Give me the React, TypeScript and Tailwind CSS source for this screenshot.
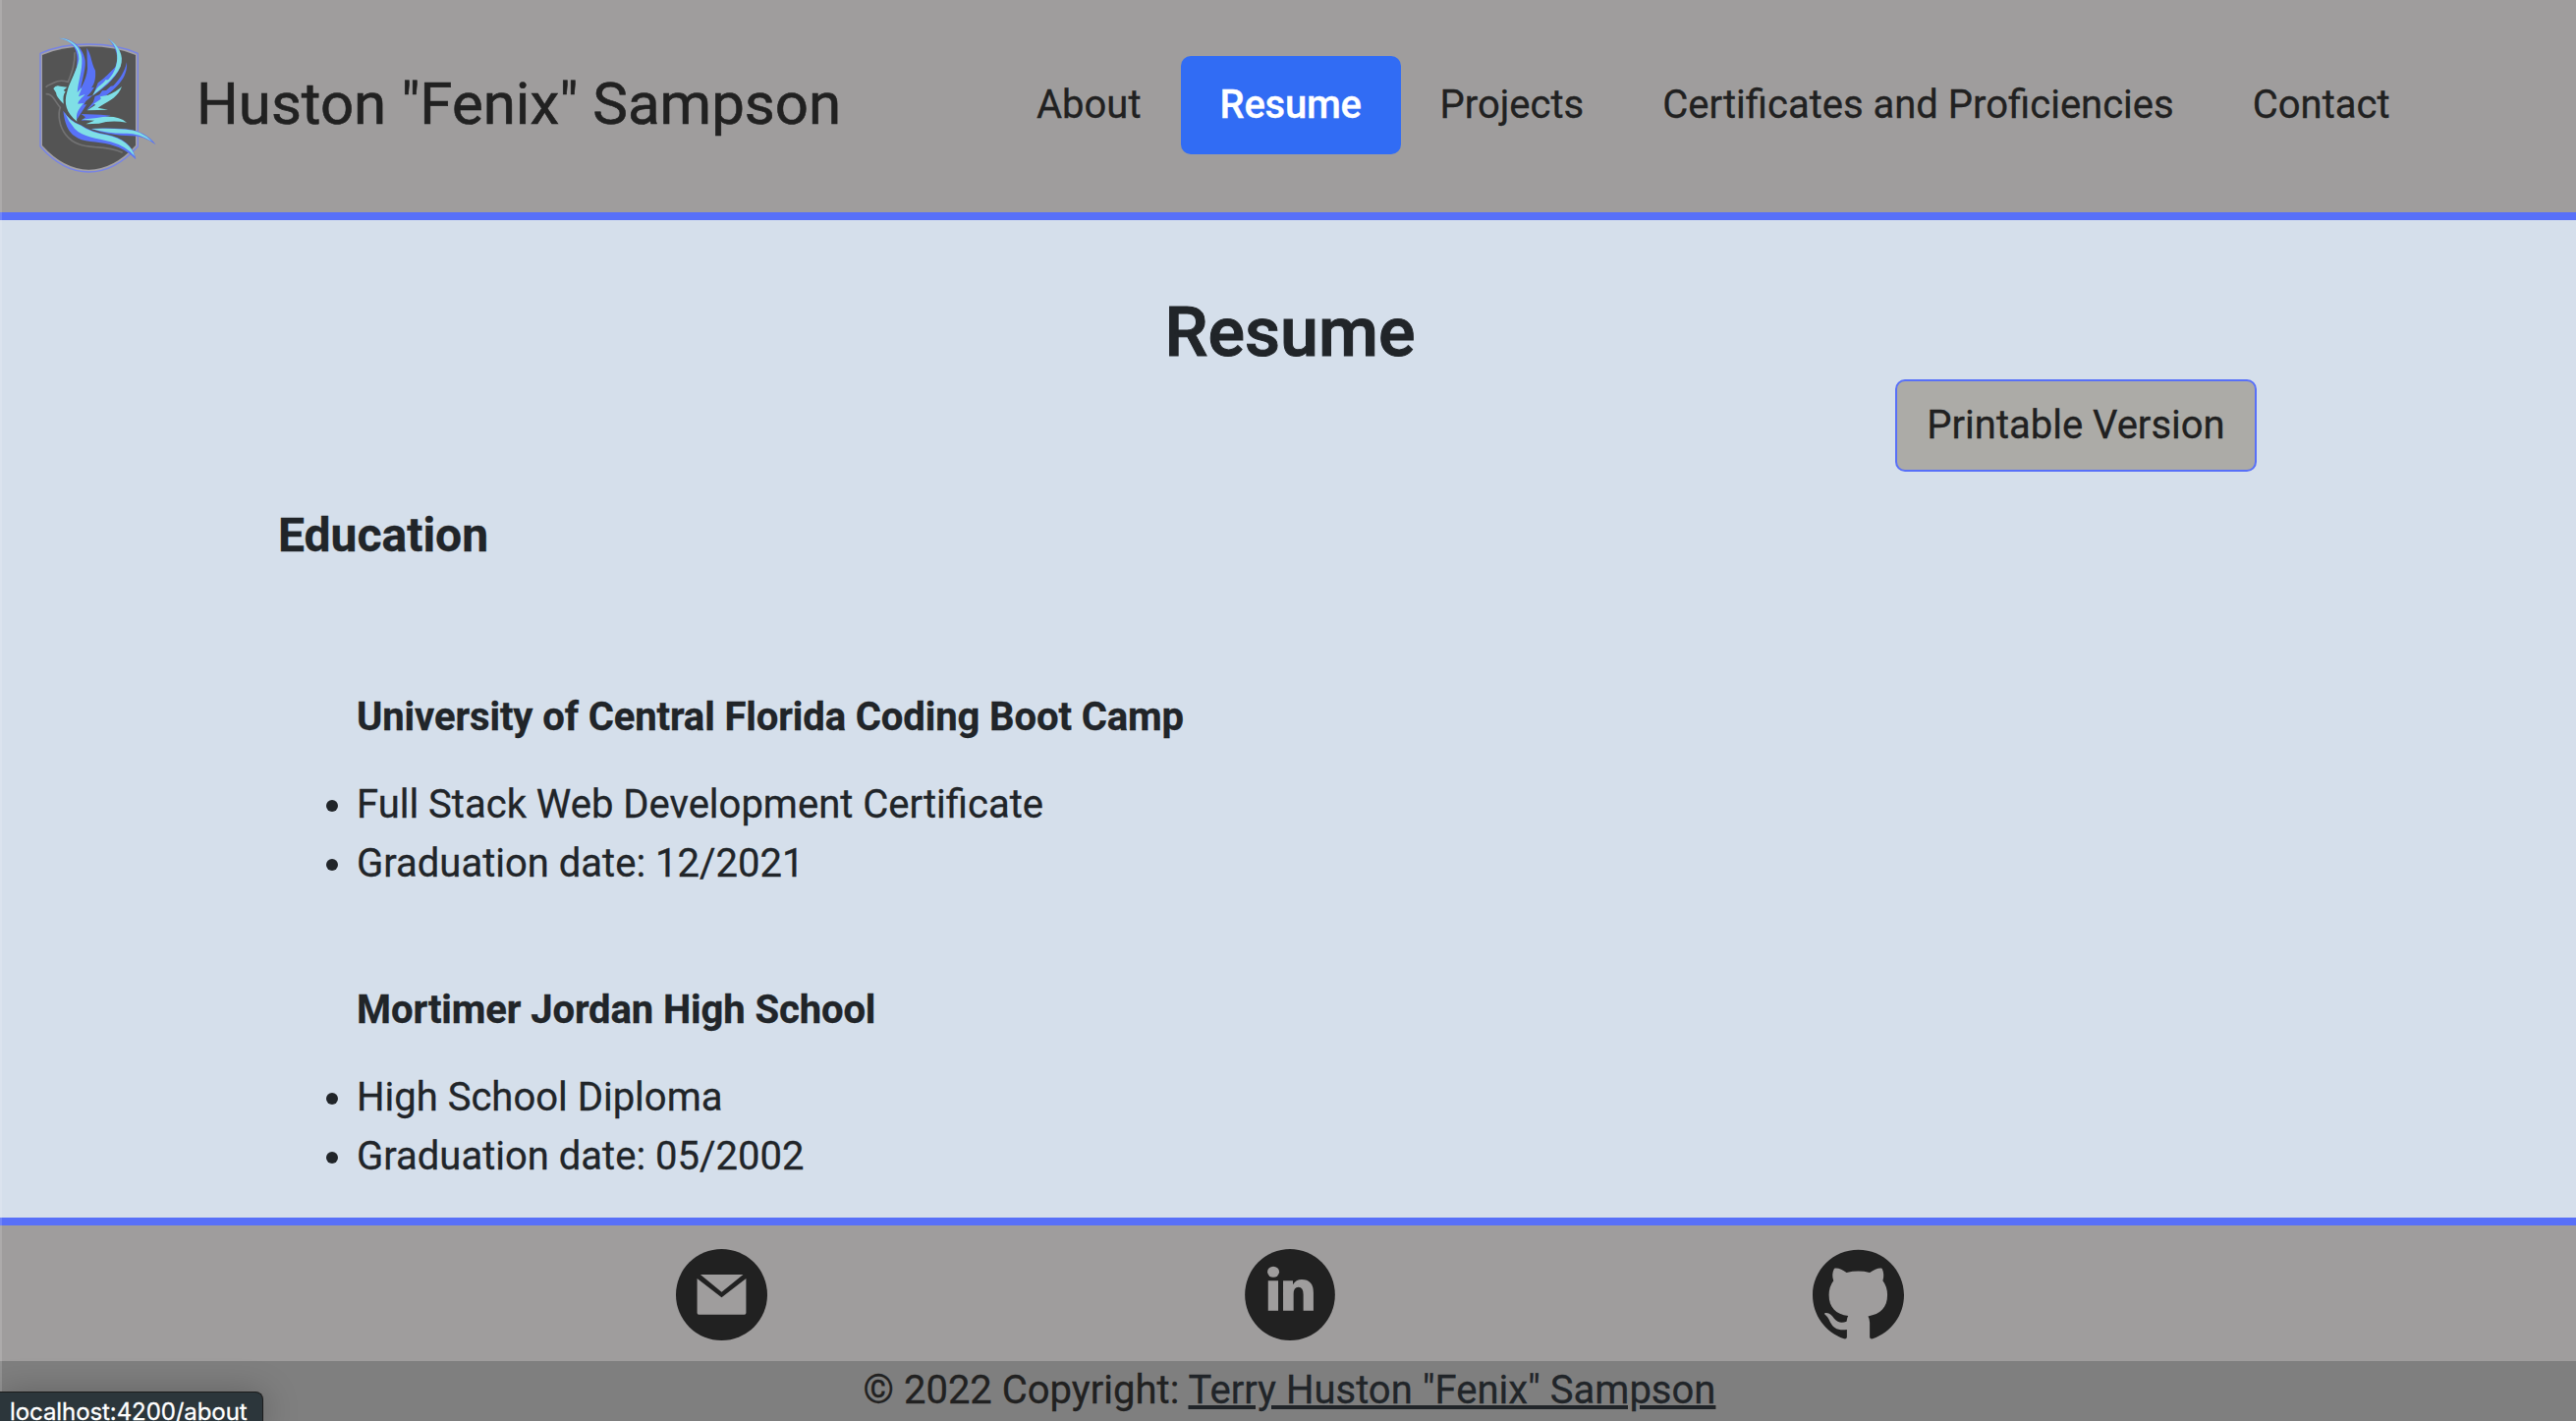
import React from "react";

const CYAN = "#7fdfe6";
const BLUE = "#5872f7";

function PhoenixLogo() {
  return (
    <svg viewBox="0 0 480 510" className="h-[170px] w-[160px] shrink-0" fill="none">
      <path d="M63 103 Q125 75 211 75 Q297 75 361 103 L361 387 Q290 465 211 465 Q132 465 63 387 Z" fill="#a3a1a6" stroke="#7683e6" strokeWidth="4" />
      <path d="M69 108 Q130 82 211 82 Q292 82 354 108 L354 384 Q287 457 211 458 Q135 457 69 384 Z" fill="#545454" />
      <path d="M168 100 C169 135 160 160 148 190 C130 185 118 185 106 192 C96 198 86 198 80 206 M80 227 C92 226 98 232 104 240 C112 252 118 262 124 268 C116 290 121 325 140 350 C165 382 195 386 230 389 C265 391 290 394 314 406" stroke="#727273" strokeWidth="5" />
      <path d="M120 56 C165 56 196 90 200 125 C203 165 180 200 176 305 L150 270 C142 225 160 190 174 145 C181 100 170 67 120 56 Z" fill={BLUE} />
      <path d="M205 86 C220 110 218 130 231 155 C233 180 229 195 219 208 L228 206 C217 224 209 230 205 235 L224 231 C207 245 199 250 197 260 L205 258 L176 303 L165 250 C178 220 204 190 207 150 Z" fill={BLUE} />
      <path d="M120 56 C156 57 189 82 190 120 C192 155 178 190 176 222 L190 207 C187 220 182 225 180 235 L200 228 C186 242 179 248 178 257 L195 255 C181 275 170 282 175 311 C142 285 134 255 145 220 C152 190 176 155 181 120 C181 82 154 63 120 56 Z" fill={CYAN} />
      <path d="M103 210 Q110 199 123 203 L145 206 L134 216 L140 220 Q131 229 134 257 Q112 237 111 223 Z" fill={CYAN} />
      <path d="M270 58 C305 80 317 112 307 145 C292 185 250 213 224 232 L239 193 C261 178 279 158 292 145 C304 118 297 86 270 58 Z" fill={BLUE} />
      <path d="M270 58 C303 79 320 110 308 143 C290 182 250 209 222 232 L235 211 C247 197 253 199 262 184 L270 184 C294 158 302 127 296 95 Q288 72 270 58 Z" fill={CYAN} />
      <path d="M327 130 C331 179 294 212 244 246 L203 278 L225 251 L230 234 L244 229 L252 217 L264 216 L278 203 L286 202 C307 181 321 158 327 130 Z" fill={BLUE} />
      <path d="M312 204 C301 234 279 246 248 263 L239 269 L270 275 L206 277 L232 260 L226 257 L248 242 L246 235 L270 230 Q297 219 312 204 Z" fill={CYAN} />
      <path d="M188 288 L248 290 L278 293 L249 300 L233 305 L188 308 L201 298 Z" fill={BLUE} />
      <path d="M188 305 L235 300 Q296 288 327 314 Q278 306 242 317 L202 319 L228 308 Z" fill={CYAN} />
      <path d="M218 333 Q270 330 325 334 Q385 340 416 382 Q379 354 340 355 Q276 355 218 333 Z" fill={BLUE} />
      <path d="M219 333 Q270 331 325 335 Q371 337 405 372 Q364 347 328 347 Q273 349 219 333 Z" fill={CYAN} />
      <path d="M133 278 Q151 308 187 322 Q217 343 265 350 C316 360 348 386 355 427 Q326 395 278 382 C235 370 193 377 167 355 Q139 335 133 278 Z" fill={BLUE} />
      <path d="M136 281 Q151 310 187 323 Q215 343 265 352 C313 361 344 387 351 417 Q325 386 278 373 C235 361 194 360 168 333 Q148 309 136 281 Z" fill={CYAN} />
    </svg>
  );
}

function MailIcon() {
  return (
    <svg viewBox="0 0 280 280" className="size-[93px]">
      <circle cx="140" cy="140" r="140" fill="#212121" />
      <path d="M75 78 H206 L140 132 Z" fill="#9f9d9d" />
      <path d="M65 90 L140 148 L215 90 V196 Q215 201 210 201 H70 Q65 201 65 196 Z" fill="#9f9d9d" />
    </svg>
  );
}

function LinkedInIcon() {
  return (
    <svg viewBox="0 0 276 280" className="h-[93px] w-[92px]">
      <ellipse cx="138" cy="140" rx="138" ry="140" fill="#212121" />
      <g fill="#9f9d9d">
        <ellipse cx="87" cy="70" rx="18" ry="16.500" />
        <path d="M71 97 H102 V189 H71 Z" />
        <path d="M117 97 H147 V109 Q156 93 174 93 Q210 93 210 134 V189 H179 V140 Q179 117 164 117 Q149 117 149 138 V189 H117 Z" />
      </g>
    </svg>
  );
}

function GitHubIcon() {
  return (
    <svg viewBox="0 0 280 280" className="size-[93px]">
      <path
        fill="#212121"
        d="M140 2 C63 2 0 64 0 141 C0 203 39 255 96 275 C102 276 105 274 105 269 V247 C75 250 64 242 54 224 C48 211 44 205 38 201 C34 198 37 195 42 196 C53 197 59 204 66 213 C77 227 91 227 104 222 Q105 211 109 205 C71 200 50 179 50 141 Q50 115 64 97 Q57 78 66 60 C76 56 91 64 104 72 Q140 64 175 72 C189 64 204 56 213 60 Q221 78 215 97 Q229 115 229 141 C229 179 208 200 170 206 Q175 214 175 225 V269 C175 274 178 276 184 275 C241 255 280 203 280 141 C280 64 217 2 140 2 Z"
      />
    </svg>
  );
}

const links = ["About", "Resume", "Projects", "Certificates and Proficiencies", "Contact"];

const schools = [
  { name: "University of Central Florida Coding Boot Camp", items: ["Full Stack Web Development Certificate", "Graduation date: 12/2021"] },
  { name: "Mortimer Jordan High School", items: ["High School Diploma", "Graduation date: 05/2002"] },
];

export default function App() {
  return (
    <div className="relative flex h-[1446px] w-full flex-col overflow-hidden bg-[#d5dfeb] font-['Roboto',sans-serif] text-[40px] leading-[60px] text-[#212529] [-webkit-text-stroke:0.3px_currentColor]">
      <header className="flex h-[224px] shrink-0 items-start border-b-8 border-[#5870f8] bg-[#9f9d9d] pl-5 text-[#212121]">
        <div className="flex pt-5">
          <PhoenixLogo />
          <span className="ml-[20px] mt-[41px] w-[830px] whitespace-nowrap text-[60px] leading-[90px] [-webkit-text-stroke:0.6px_currentColor]">Huston "Fenix" Sampson</span>
        </div>
        <nav className="-ml-[15px] mt-[57px] flex whitespace-nowrap">
          {links.map((l) => (
            <a key={l} className={l === "Resume" ? "w-[224px] rounded-[10px] bg-[#316cf4] px-10 py-5 font-medium tracking-[-0.25px] text-white" : "px-10 py-5"}>
              {l}
            </a>
          ))}
        </nav>
      </header>

      <main className="flex h-[1015px] shrink-0 flex-col pl-[283px] pr-[279px]">
        <h1 className="mt-[72px] h-[90px] text-center text-[70px] font-medium leading-[84px] [-webkit-text-stroke:1px_currentColor]">Resume</h1>
        <button className="mr-[46px] h-[94px] w-[368px] self-end rounded-[10px] border-2 border-[#5870f8] bg-[#acaba7] text-[#212121]">Printable Version</button>
        <h2 className="mt-[35px] text-[48px] font-bold leading-[60px]">Education</h2>
        <div className="mt-[125px] flex flex-col gap-[89px] pl-20">
          {schools.map((s) => (
            <section key={s.name}>
              <h3 className="font-bold tracking-[-0.11px]">{s.name}</h3>
              <ul className="mt-[29px] list-outside list-disc">
                {s.items.map((i) => (
                  <li key={i}>{i}</li>
                ))}
              </ul>
            </section>
          ))}
        </div>
      </main>

      <footer className="flex grow flex-col border-t-8 border-[#5870f8] bg-[#9f9d9d] text-[#212121]">
        <div className="flex h-[138px] shrink-0 pl-[446px] pt-6">
          <a className="flex w-[577px] justify-center"><MailIcon /></a>
          <a className="flex w-[580px] justify-center"><LinkedInIcon /></a>
          <a className="flex w-[577px] justify-center"><GitHubIcon /></a>
        </div>
        <div className="h-[61px] bg-[#7f7f7f] pl-[3px] text-center">
          © 2022 Copyright: <a className="text-[#212529] underline">Terry Huston "Fenix" Sampson</a>
        </div>
      </footer>

      <div className="absolute left-0 top-0 h-full w-0.5 bg-white/15" />
      <div className="absolute bottom-0 left-0 h-[30px] w-[268px] whitespace-nowrap rounded-tr-[8px] border-r border-t border-[#1c1c1c] bg-[#2c363b] pl-[10px] pt-[11px] font-['Inter',sans-serif] text-[24px] leading-[18px] tracking-[-0.08px] text-white shadow-[0_4px_36px_rgba(0,0,0,0.3)]">
        localhost:4200/about
      </div>
    </div>
  );
}
